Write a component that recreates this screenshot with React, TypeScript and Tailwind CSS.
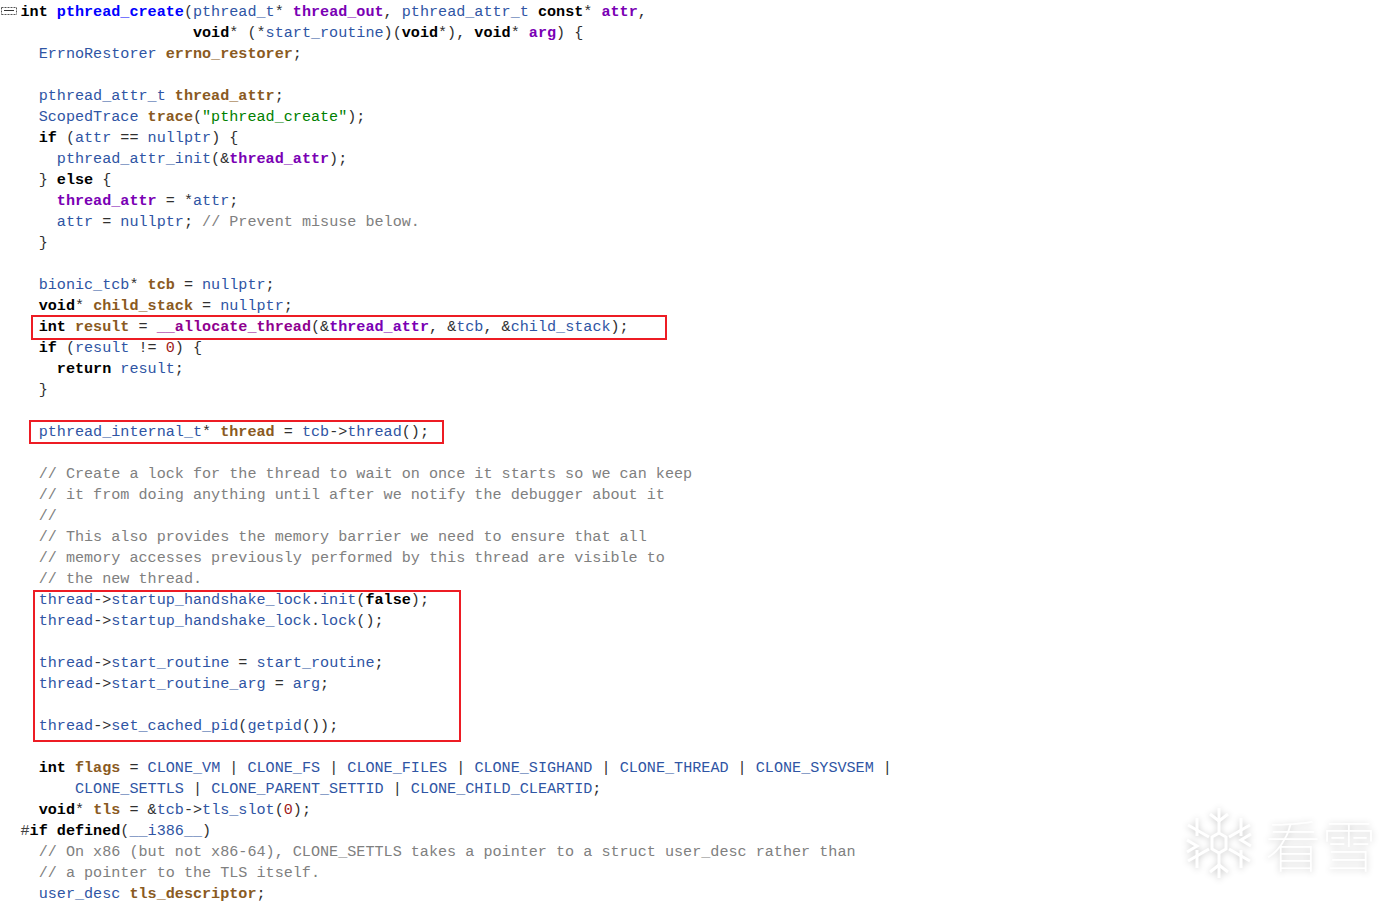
import React from "react";

const K = "font-bold text-black";
const F = "font-bold text-[#0000ff]";
const P = "font-bold text-[#7a00b4]";
const L = "font-bold text-[#8a5a22]";
const G = "font-bold text-[#8f008f]";
const T = "text-[#2f55a4]";
const O = "text-[#303030]";
const C = "text-[#808080]";
const S = "text-[#008000]";
const N = "text-[#a02020]";
const H = "text-[#404040]";

type Tok = [string, string];
const lines: Tok[][] = [
  [[K, "int "], [F, "pthread_create"], [O, "("], [T, "pthread_t"], [O, "* "], [P, "thread_out"], [O, ", "], [T, "pthread_attr_t "], [K, "const"], [O, "* "], [P, "attr"], [O, ","]],
  [[O, "                   "], [K, "void"], [O, "* ("], [O, "*"], [T, "start_routine"], [O, ")("], [K, "void"], [O, "*), "], [K, "void"], [O, "* "], [P, "arg"], [O, ") {"]],
  [[T, "  ErrnoRestorer "], [L, "errno_restorer"], [O, ";"]],
  [],
  [[T, "  pthread_attr_t "], [L, "thread_attr"], [O, ";"]],
  [[T, "  ScopedTrace "], [L, "trace"], [O, "("], [S, "\"pthread_create\""], [O, ");"]],
  [[K, "  if "], [O, "("], [T, "attr"], [O, " == "], [T, "nullptr"], [O, ") {"]],
  [[T, "    pthread_attr_init"], [O, "(&"], [P, "thread_attr"], [O, ");"]],
  [[O, "  } "], [K, "else "], [O, "{"]],
  [[P, "    thread_attr"], [O, " = *"], [T, "attr"], [O, ";"]],
  [[T, "    attr"], [O, " = "], [T, "nullptr"], [O, "; "], [C, "// Prevent misuse below."]],
  [[O, "  }"]],
  [],
  [[T, "  bionic_tcb"], [O, "* "], [L, "tcb"], [O, " = "], [T, "nullptr"], [O, ";"]],
  [[K, "  void"], [O, "* "], [L, "child_stack"], [O, " = "], [T, "nullptr"], [O, ";"]],
  [[K, "  int "], [L, "result"], [O, " = "], [G, "__allocate_thread"], [O, "(&"], [P, "thread_attr"], [O, ", &"], [T, "tcb"], [O, ", &"], [T, "child_stack"], [O, ");"]],
  [[K, "  if "], [O, "("], [T, "result"], [O, " != "], [N, "0"], [O, ") {"]],
  [[K, "    return "], [T, "result"], [O, ";"]],
  [[O, "  }"]],
  [],
  [[T, "  pthread_internal_t"], [O, "* "], [L, "thread"], [O, " = "], [T, "tcb"], [O, "->"], [T, "thread"], [O, "();"]],
  [],
  [[C, "  // Create a lock for the thread to wait on once it starts so we can keep"]],
  [[C, "  // it from doing anything until after we notify the debugger about it"]],
  [[C, "  //"]],
  [[C, "  // This also provides the memory barrier we need to ensure that all"]],
  [[C, "  // memory accesses previously performed by this thread are visible to"]],
  [[C, "  // the new thread."]],
  [[T, "  thread"], [O, "->"], [T, "startup_handshake_lock"], [O, "."], [T, "init"], [O, "("], [K, "false"], [O, ");"]],
  [[T, "  thread"], [O, "->"], [T, "startup_handshake_lock"], [O, "."], [T, "lock"], [O, "();"]],
  [],
  [[T, "  thread"], [O, "->"], [T, "start_routine"], [O, " = "], [T, "start_routine"], [O, ";"]],
  [[T, "  thread"], [O, "->"], [T, "start_routine_arg"], [O, " = "], [T, "arg"], [O, ";"]],
  [],
  [[T, "  thread"], [O, "->"], [T, "set_cached_pid"], [O, "("], [T, "getpid"], [O, "());"]],
  [],
  [[K, "  int "], [L, "flags"], [O, " = "], [T, "CLONE_VM"], [O, " | "], [T, "CLONE_FS"], [O, " | "], [T, "CLONE_FILES"], [O, " | "], [T, "CLONE_SIGHAND"], [O, " | "], [T, "CLONE_THREAD"], [O, " | "], [T, "CLONE_SYSVSEM"], [O, " |"]],
  [[T, "      CLONE_SETTLS"], [O, " | "], [T, "CLONE_PARENT_SETTID"], [O, " | "], [T, "CLONE_CHILD_CLEARTID"], [O, ";"]],
  [[K, "  void"], [O, "* "], [L, "tls"], [O, " = &"], [T, "tcb"], [O, "->"], [T, "tls_slot"], [O, "("], [N, "0"], [O, ");"]],
  [[H, "#"], [K, "if defined"], [O, "("], [T, "__i386__"], [O, ")"]],
  [[C, "  // On x86 (but not x86-64), CLONE_SETTLS takes a pointer to a struct user_desc rather than"]],
  [[C, "  // a pointer to the TLS itself."]],
  [[T, "  user_desc "], [L, "tls_descriptor"], [O, ";"]],
];

function Box({ className }: { className: string }) {
  return <div className={"absolute border-2 border-[#ed1c24] " + className} />;
}

export default function App() {
  return (
    <div className="relative w-[1395px] h-[904px] overflow-hidden bg-white">
      <svg className="absolute left-[1px] top-[6px]" width="16" height="10" viewBox="0 0 16 10">
        <path d="M0.5 1.5H15.5M0.5 8.5H15.5M0.5 1.5V8.5M15.5 1.5V8.5" stroke="#555" strokeDasharray="2 1" fill="none" />
        <path d="M3 4.5H13" stroke="#333" />
      </svg>
      <div className="pt-[2px] pl-[20.5px] font-['Liberation_Mono',monospace] text-[15.13px] leading-[21px] whitespace-pre">
        {lines.map((line, i) => (
          <div key={i} className="h-[21px]">
            {line.map(([c, t], j) => (
              <span key={j} className={c}>{t}</span>
            ))}
          </div>
        ))}
      </div>
      <Box className="left-[31px] top-[315px] w-[636px] h-[25px]" />
      <Box className="left-[29px] top-[420px] w-[415px] h-[24px]" />
      <Box className="left-[33px] top-[590px] w-[428px] h-[152px]" />
      <div className="absolute left-[1185px] top-[806px] flex items-center gap-[12px] drop-shadow-[0_1px_3px_rgba(0,0,0,0.22)]">
        <svg width="68" height="74" viewBox="0 0 68 74" fill="none" stroke="#ffffff" strokeWidth="3">
          <path d="M34 2V26M34 48V72M3 19L24 31M44 43L65 55M3 55L24 43M44 31L65 19" />
          <path d="M25 8L34 15L43 8M25 66L34 59L43 66M12 30V12M56 44V62M12 44V62M56 30V12M2 34L12 40L2 46M66 28L56 34L66 40" />
          <path d="M34 27L41 31V43L34 47L27 43V31Z" />
        </svg>
        <div className="font-['Noto_Sans_CJK_SC',sans-serif] font-thin text-[56px] leading-[70px] text-white tracking-[0px]">看雪</div>
      </div>
    </div>
  );
}
